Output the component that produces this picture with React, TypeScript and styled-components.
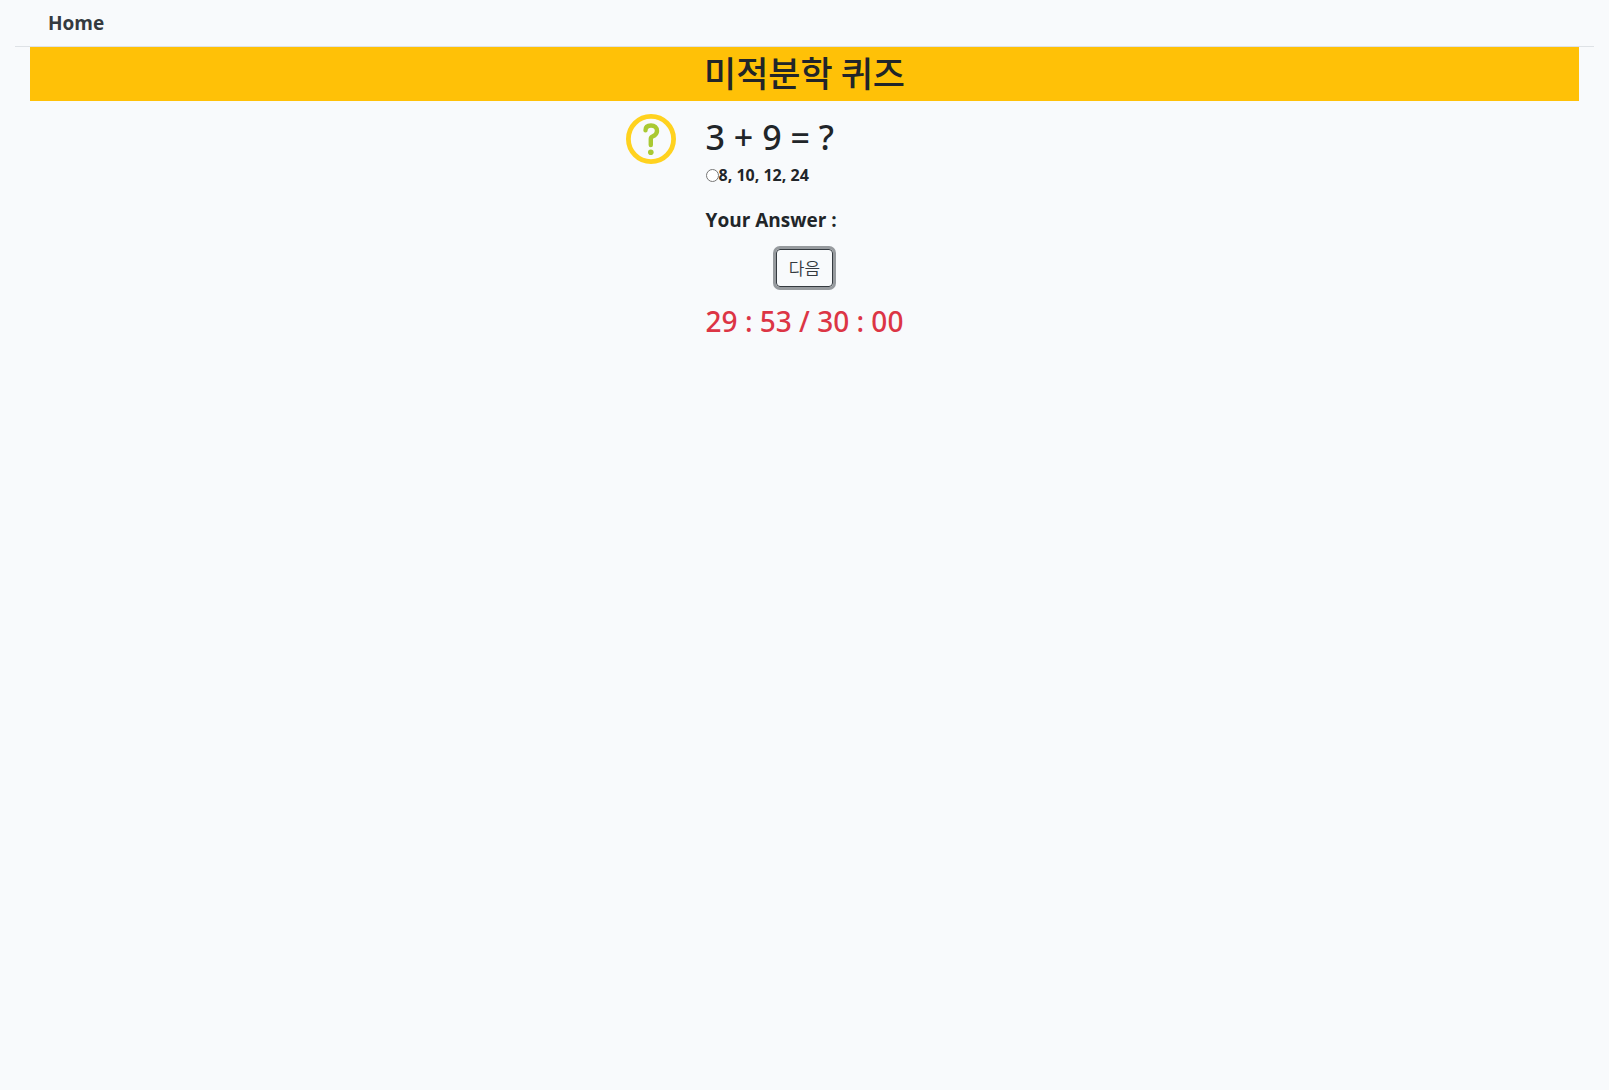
import { FormEvent, useState } from "react";
import styled, { createGlobalStyle } from "styled-components";

const GlobalStyle = createGlobalStyle`
  *, *::before, *::after { box-sizing: border-box; }
  body {
    margin: 0;
    background: #f8fafc;
    color: #212529;
    font-family: "Open Sans", "Noto Sans CJK KR", sans-serif;
    font-size: 16px;
    line-height: 24px;
  }
`;

const Page = styled.div`
  padding: 0 15px;
`;

const Nav = styled.nav`
  display: flex;
  padding: 8px 16px;
  border-bottom: 1px solid #dee2e6;
`;

const NavLink = styled.a`
  padding: 0 17px;
  color: #343a40;
  font-size: 19px;
  font-weight: 700;
  line-height: 30px;
  text-decoration: none;
`;

const Main = styled.main`
  padding: 0 15px;
`;

const Title = styled.h1`
  margin: 0;
  padding: 7px 8px 11px;
  background: #ffc107;
  font-family: "Noto Sans CJK KR", sans-serif;
  font-size: 35px;
  font-weight: 500;
  line-height: 36px;
  text-align: center;
`;

const Quiz = styled.form`
  display: grid;
  grid-template-columns: 1fr auto 1fr;
  column-gap: 30px;
  padding-top: 13px;
`;

const Icon = styled.svg`
  justify-self: end;
  width: 50px;
  height: 50px;
`;

const Column = styled.div`
  display: flex;
  flex-direction: column;
  align-items: flex-start;
`;

const Question = styled.h2`
  margin: 0;
  padding: 4px 0 7px;
  font-family: "Noto Sans", sans-serif;
  font-size: 34px;
  font-weight: 500;
  line-height: 38px;
`;

const Option = styled.label`
  display: flex;
  align-items: center;
  font-size: 16px;
  font-weight: 700;
  line-height: 24px;
`;

const Radio = styled.input`
  width: 13px;
  height: 13px;
  margin: 0;
`;

const Answer = styled.p`
  margin: 0;
  padding: 21px 0 17px;
  font-size: 19px;
  font-weight: 700;
  line-height: 24px;
`;

const NextButton = styled.button`
  align-self: center;
  padding: 6px 12px;
  border: 1px solid #343a40;
  border-radius: 4px;
  background: transparent;
  box-shadow: 0 0 0 3px rgba(52, 58, 64, 0.5);
  color: #343a40;
  font-family: "Noto Sans CJK KR", sans-serif;
  font-size: 17px;
  font-weight: 350;
  line-height: 24px;
  cursor: pointer;
`;

const Timer = styled.p`
  margin: 0;
  padding-top: 17px;
  color: #dc3545;
  font-family: "Noto Sans", sans-serif;
  font-size: 28px;
  font-weight: 500;
  line-height: 34px;
  white-space: nowrap;
`;

const choices = ["8", "10", "12", "24"];

export default function App() {
  const [picked, setPicked] = useState(false);
  const next = (event: FormEvent) => event.preventDefault();

  return (
    <>
      <GlobalStyle />
      <Page>
        <Nav>
          <NavLink href="#home">Home</NavLink>
        </Nav>
        <Main>
          <Title>미적분학 퀴즈</Title>
          <Quiz onSubmit={next}>
            <Icon viewBox="0 0 50 50" fill="none" aria-hidden="true">
              <circle cx="25" cy="25" r="22.6" stroke="#ffd21f" strokeWidth="4.8" />
              <path
                d="M19.5 16.3C19.5 13 21.5 11.5 25 11.5S31 13.5 31 17C31 20 29 21.5 26.5 22.5C25.1 23.1 24.8 23.8 24.8 25V31"
                stroke="#a9c932"
                strokeWidth="4.4"
                strokeLinecap="round"
                strokeLinejoin="round"
              />
              <circle cx="24.8" cy="38.2" r="2.8" fill="#a9c932" />
            </Icon>
            <Column>
              <Question>3 + 9 = ?</Question>
              <Option htmlFor="choice">
                <Radio
                  type="radio"
                  id="choice"
                  name="choice"
                  checked={picked}
                  onChange={() => setPicked(true)}
                />
                {choices.join(", ")}
              </Option>
              <Answer>Your Answer :</Answer>
              <NextButton type="submit">다음</NextButton>
              <Timer>29 : 53 / 30 : 00</Timer>
            </Column>
          </Quiz>
        </Main>
      </Page>
    </>
  );
}
